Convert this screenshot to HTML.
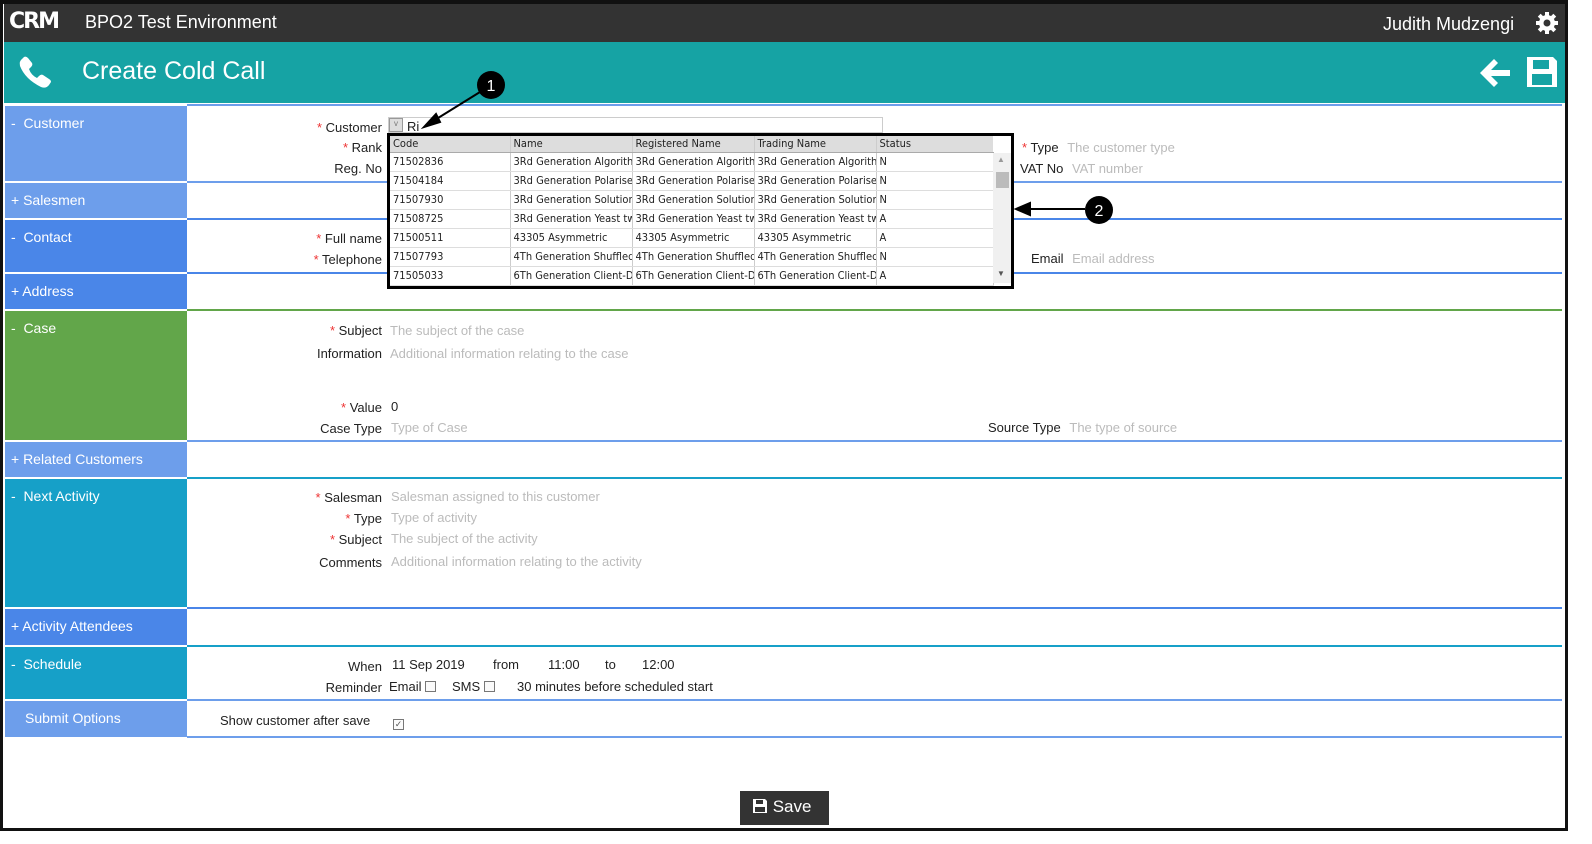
<!DOCTYPE html>
<html><head><meta charset="utf-8"><style>
*{margin:0;padding:0;box-sizing:border-box}
body{width:1592px;height:844px;position:relative;overflow:hidden;background:#fff;font-family:"Liberation Sans",Arial,sans-serif;font-size:13px;color:#222}
.a{position:absolute;white-space:nowrap}
.frame{position:absolute;left:0;top:0;width:1568px;height:831px;border:3px solid #111;border-top-width:4px}
.sec{position:absolute;left:5px;width:182px;color:#fff;font-size:14px;padding:9px 0 0 6px}
.ln{position:absolute;left:187px;width:1375px;height:2px}
.lb{position:absolute;text-align:right;width:200px;left:182px}
.r{color:#e33}
.ph{color:#bbb}
table{border-collapse:collapse;font-size:11px;font-family:"DejaVu Sans Condensed","Liberation Sans",sans-serif}
td,th{height:19px;border-bottom:1px solid #ddd;border-right:1px solid #ccc;padding-left:3px;text-align:left;font-weight:normal;overflow:hidden;white-space:nowrap}
th{background:#ddd;height:16px;border-bottom:1px solid #aaa}
.cb{display:inline-block;width:11px;height:11px;border:1px solid #777;vertical-align:-1px;background:#fafafa}
</style></head><body>
<div class="frame"></div>
<div class="a" style="left:4px;top:4px;width:1561px;height:38px;background:#333"></div>
<div class="a" style="left:9px;top:10px;color:#fff;font-weight:bold;font-size:22px;letter-spacing:-2px;line-height:24px;font-family:'DejaVu Sans',sans-serif">CRM</div>
<div class="a" style="left:85px;top:12px;color:#fff;font-size:18px">BPO2 Test Environment</div>
<div class="a" style="left:1383px;top:14px;color:#fff;font-size:18px">Judith Mudzengi</div>
<svg class="a" style="left:1535px;top:11px" width="24" height="24" viewBox="0 0 24 24"><g fill="#fff"><circle cx="12" cy="12" r="8"/><rect x="10" y="1" width="4" height="22"/><rect x="1" y="10" width="22" height="4"/><rect x="10" y="1" width="4" height="22" transform="rotate(45 12 12)"/><rect x="10" y="1" width="4" height="22" transform="rotate(-45 12 12)"/></g><circle cx="12" cy="12" r="3.5" fill="#333"/></svg>
<div class="a" style="left:4px;top:42px;width:1561px;height:61px;background:#16a3a4"></div>
<svg class="a" style="left:17px;top:55px" width="36" height="36" viewBox="0 0 36 36"><path d="M5 4 Q2 6 3 11 Q8 24 24 32 Q29 34 32 30 L34 27 Q34 25 32 24 L26 20 Q24 19 22 21 L20 23 Q14 20 12 14 L14 12 Q16 10 15 8 L11 3 Q9 1 7 2 Z" fill="#fff"/></svg>
<div class="a" style="left:82px;top:57px;color:#fff;font-size:25px">Create Cold Call</div>
<svg class="a" style="left:1478px;top:57px" width="34" height="32" viewBox="0 0 34 32"><path d="M16 2 L2 16 L16 30 L20 26 L13 19 L32 19 L32 13 L13 13 L20 6 Z" fill="#fff"/></svg>
<svg class="a" style="left:1525px;top:55px" width="34" height="34" viewBox="0 0 34 34"><path d="M2 2 H28 L32 6 V32 H2 Z" fill="#fff"/><rect x="8" y="5" width="16" height="9" fill="#16a3a4"/><rect x="7" y="19" width="20" height="11" fill="#16a3a4"/></svg>

<!-- sections -->
<div class="sec" style="top:106px;height:75px;background:#6d9eeb">-&nbsp; Customer</div>
<div class="ln" style="top:104px;background:#6d9eeb"></div>
<div class="ln" style="top:181px;background:#6d9eeb"></div>
<div class="sec" style="top:183px;height:35px;background:#6d9eeb">+ Salesmen</div>
<div class="ln" style="top:218px;background:#4a86e8"></div>
<div class="sec" style="top:220px;height:52px;background:#4a86e8">-&nbsp; Contact</div>
<div class="ln" style="top:272px;background:#4a86e8"></div>
<div class="sec" style="top:274px;height:35px;background:#4a86e8">+ Address</div>
<div class="ln" style="top:309px;background:#62a64a"></div>
<div class="sec" style="top:311px;height:129px;background:#62a64a">-&nbsp; Case</div>
<div class="ln" style="top:440px;background:#6d9eeb"></div>
<div class="sec" style="top:442px;height:35px;background:#6d9eeb">+ Related Customers</div>
<div class="ln" style="top:477px;background:#16a0c8"></div>
<div class="sec" style="top:479px;height:128px;background:#16a0c8">-&nbsp; Next Activity</div>
<div class="ln" style="top:607px;background:#4a86e8"></div>
<div class="sec" style="top:609px;height:36px;background:#4a86e8">+ Activity Attendees</div>
<div class="ln" style="top:645px;background:#16a0c8"></div>
<div class="sec" style="top:647px;height:52px;background:#16a0c8">-&nbsp; Schedule</div>
<div class="ln" style="top:699px;background:#6d9eeb"></div>
<div class="sec" style="top:701px;height:36px;background:#6d9eeb;padding-left:20px">Submit Options</div>
<div class="ln" style="top:736px;background:#6d9eeb"></div>

<!-- customer -->
<div class="lb" style="top:120px"><span class="r">* </span>Customer</div>
<div class="a" style="left:388px;top:117px;width:495px;height:16px;border:1px solid #ccc"></div>
<div class="a" style="left:389px;top:118px;width:14px;height:14px;background:#ddd;border:1px solid #999;font-size:8px;text-align:center;color:#777">v</div>
<div class="a" style="left:407px;top:119px;text-decoration:underline wavy #e33">Ri</div>
<div class="lb" style="top:140px"><span class="r">* </span>Rank</div>
<div class="lb" style="top:161px">Reg. No</div>
<div class="a" style="left:1022px;top:140px"><span class="r">* </span>Type <span class="ph" style="margin-left:5px">The customer type</span></div>
<div class="a" style="left:1020px;top:161px">VAT No <span class="ph" style="margin-left:5px">VAT number</span></div>
<div class="lb" style="top:231px"><span class="r">* </span>Full name</div>
<div class="lb" style="top:252px"><span class="r">* </span>Telephone</div>
<div class="a" style="left:1031px;top:251px">Email <span class="ph" style="margin-left:5px">Email address</span></div>

<!-- case -->
<div class="lb" style="top:323px"><span class="r">* </span>Subject</div><div class="a ph" style="left:390px;top:323px">The subject of the case</div>
<div class="lb" style="top:346px">Information</div><div class="a ph" style="left:390px;top:346px">Additional information relating to the case</div>
<div class="lb" style="top:400px"><span class="r">* </span>Value</div><div class="a" style="left:391px;top:399px">0</div>
<div class="lb" style="top:421px">Case Type</div><div class="a ph" style="left:391px;top:420px">Type of Case</div>
<div class="a" style="left:988px;top:420px">Source Type <span class="ph" style="margin-left:5px">The type of source</span></div>

<!-- next activity -->
<div class="lb" style="top:490px"><span class="r">* </span>Salesman</div><div class="a ph" style="left:391px;top:489px">Salesman assigned to this customer</div>
<div class="lb" style="top:511px"><span class="r">* </span>Type</div><div class="a ph" style="left:391px;top:510px">Type of activity</div>
<div class="lb" style="top:532px"><span class="r">* </span>Subject</div><div class="a ph" style="left:391px;top:531px">The subject of the activity</div>
<div class="lb" style="top:555px">Comments</div><div class="a ph" style="left:391px;top:554px">Additional information relating to the activity</div>

<!-- schedule -->
<div class="lb" style="top:659px">When</div>
<div class="a" style="left:392px;top:657px">11 Sep 2019</div>
<div class="a" style="left:493px;top:657px">from</div>
<div class="a" style="left:548px;top:657px">11:00</div>
<div class="a" style="left:605px;top:657px">to</div>
<div class="a" style="left:642px;top:657px">12:00</div>
<div class="lb" style="top:680px">Reminder</div>
<div class="a" style="left:389px;top:679px">Email <span class="cb"></span></div>
<div class="a" style="left:452px;top:679px">SMS <span class="cb"></span></div>
<div class="a" style="left:517px;top:679px">30 minutes before scheduled start</div>
<div class="a" style="left:220px;top:713px">Show customer after save</div>
<div class="a" style="left:393px;top:714px"><span class="cb" style="font-size:9px;line-height:9px;text-align:center;color:#555">✓</span></div>

<!-- save -->
<div class="a" style="left:740px;top:791px;width:89px;height:34px;background:#333;color:#fff;font-size:17px;padding:6px 0 0 12px"><svg width="16" height="16" viewBox="0 0 16 16" style="vertical-align:-2px"><path d="M1 1H13L15 3V15H1Z" fill="#fff"/><rect x="4" y="2" width="7" height="4" fill="#333"/><rect x="3" y="9" width="10" height="5" fill="#333"/></svg> Save</div>

<!-- dropdown -->
<div class="a" style="left:387px;top:133px;width:627px;height:156px;border:3px solid #000;background:#fff;overflow:hidden">
<table style="width:603px;table-layout:fixed">
<colgroup><col style="width:120px"><col style="width:122px"><col style="width:122px"><col style="width:122px"><col style="width:117px"></colgroup>
<tr><th>Code</th><th>Name</th><th>Registered Name</th><th>Trading Name</th><th style="border-right:0">Status</th></tr>
<tr><td>71502836</td><td>3Rd Generation Algorithm</td><td>3Rd Generation Algorithm</td><td>3Rd Generation Algorithm</td><td>N</td></tr>
<tr><td>71504184</td><td>3Rd Generation Polarised</td><td>3Rd Generation Polarised</td><td>3Rd Generation Polarised</td><td>N</td></tr>
<tr><td>71507930</td><td>3Rd Generation Solution</td><td>3Rd Generation Solution</td><td>3Rd Generation Solution</td><td>N</td></tr>
<tr><td>71508725</td><td>3Rd Generation Yeast two</td><td>3Rd Generation Yeast two</td><td>3Rd Generation Yeast two</td><td>A</td></tr>
<tr><td>71500511</td><td>43305 Asymmetric</td><td>43305 Asymmetric</td><td>43305 Asymmetric</td><td>A</td></tr>
<tr><td>71507793</td><td>4Th Generation Shuffled</td><td>4Th Generation Shuffled</td><td>4Th Generation Shuffled</td><td>N</td></tr>
<tr><td>71505033</td><td>6Th Generation Client-D</td><td>6Th Generation Client-D</td><td>6Th Generation Client-D</td><td>A</td></tr>
</table>
<div class="a" style="left:603px;top:17px;width:18px;height:130px;background:#f0f0f0"></div>
<div class="a" style="left:606px;top:36px;width:13px;height:16px;background:#bbb"></div>
<div class="a" style="left:607px;top:19px;font-size:8px;color:#999">▲</div>
<div class="a" style="left:607px;top:133px;font-size:8px;color:#555">▼</div>
</div>

<!-- callouts -->
<svg class="a" style="left:0;top:0" width="1592" height="844"><g stroke="#000" stroke-width="2" fill="#000">
<line x1="480" y1="92" x2="430" y2="123"/><path d="M424 127 L436 114 L440 122 Z"/>
<line x1="1085" y1="209" x2="1025" y2="209"/><path d="M1016 209 L1030 203 L1030 215 Z"/></g>
<circle cx="491" cy="85" r="14" fill="#000"/><text x="491" y="91" fill="#fff" font-size="16" text-anchor="middle" font-family="Liberation Sans">1</text>
<circle cx="1099" cy="210" r="14" fill="#000"/><text x="1099" y="216" fill="#fff" font-size="16" text-anchor="middle" font-family="Liberation Sans">2</text>
</svg>
</body></html>
